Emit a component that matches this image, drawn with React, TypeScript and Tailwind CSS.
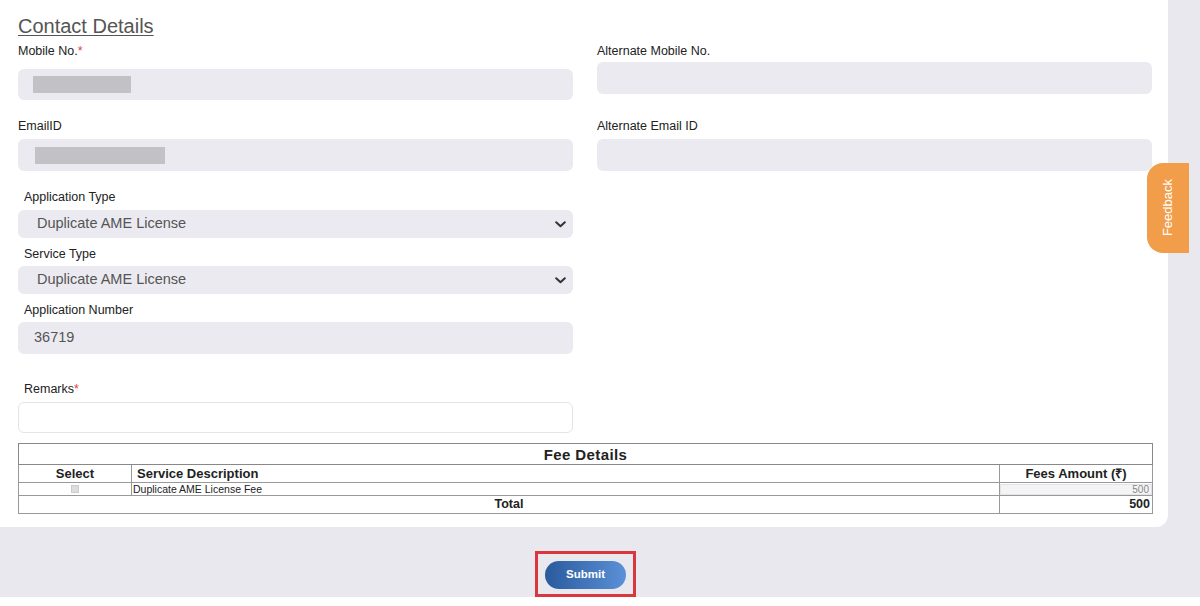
const Label = ({ text, req, className = "" }: { text: string; req?: boolean; className?: string }) => (
  <div className={`text-[12.5px] leading-[13px] text-[#222] ${className}`}>
    {text}
    {req && <span className="text-[#e0403a]">*</span>}
  </div>
);

const GrayInput = ({ className = "", children }: { className?: string; children?: React.ReactNode }) => (
  <div className={`w-[555px] rounded-md bg-[#ebeaf0] flex items-center ${className}`}>{children}</div>
);

const SelectBox = ({ value }: { value: string }) => (
  <div className="w-[555px] h-[28px] rounded-md bg-[#ebeaf0] flex items-center justify-between pl-[19px] pr-[7px]">
    <span className="text-[14.5px] text-[#555]">{value}</span>
    <svg width="11" height="7" viewBox="0 0 11 7" className="mt-[1px]">
      <polyline points="1.2,1.2 5.5,5.2 9.8,1.2" fill="none" stroke="#333" strokeWidth="2" strokeLinecap="round" strokeLinejoin="round" />
    </svg>
  </div>
);

export default function App() {
  return (
    <div className="w-[1200px] h-[606px] bg-white overflow-hidden relative" style={{ fontFamily: '"Liberation Sans", Arial, sans-serif' }}>
      <div className="h-[597px] bg-[#e9e8ef] flex flex-col">
        <div className="w-[1168px] bg-white rounded-br-xl pl-[18px] pt-[15px] pb-[13px]">
          <h2 className="text-[20px] leading-[22px] text-[#555] underline underline-offset-2 decoration-1">Contact Details</h2>

          <div className="flex gap-[24px] mt-[8px]">
            <div className="flex flex-col">
              <Label text="Mobile No." req />
              <GrayInput className="h-[31px] mt-[11px] pl-[15px]">
                <div className="w-[98px] h-[17px] bg-[#c2c1c6]" />
              </GrayInput>
            </div>
            <div className="flex flex-col">
              <Label text="Alternate Mobile No." />
              <GrayInput className="h-[32px] mt-[4px]" />
            </div>
          </div>

          <div className="flex gap-[24px] mt-[20px]">
            <div className="flex flex-col">
              <Label text="EmailID" />
              <GrayInput className="h-[32px] mt-[6px] pl-[17px]">
                <div className="w-[130px] h-[17px] bg-[#c2c1c6]" />
              </GrayInput>
            </div>
            <div className="flex flex-col">
              <Label text="Alternate Email ID" />
              <GrayInput className="h-[32px] mt-[6px]" />
            </div>
          </div>

          <Label text="Application Type" className="ml-[6px] mt-[20px]" />
          <div className="mt-[6px]">
            <SelectBox value="Duplicate AME License" />
          </div>
          <Label text="Service Type" className="ml-[6px] mt-[10px]" />
          <div className="mt-[5px]">
            <SelectBox value="Duplicate AME License" />
          </div>
          <Label text="Application Number" className="ml-[6px] mt-[10px]" />
          <GrayInput className="h-[32px] mt-[5px] pl-[16px]">
            <span className="text-[14.5px] text-[#555]">36719</span>
          </GrayInput>

          <Label text="Remarks" req className="ml-[6px] mt-[29px]" />
          <div className="w-[555px] h-[31px] mt-[6px] rounded-md border border-[#e4e4e8] bg-white" />

          <table className="w-[1135px] mt-[10px] border-collapse border border-[#555] text-[#222] leading-none">
            <tbody>
              <tr className="h-[21px]">
                <td colSpan={3} className="p-0 text-center text-[15px] tracking-[0.4px] font-bold border border-[#888]">Fee Details</td>
              </tr>
              <tr className="h-[18px]">
                <td className="p-0 w-[113px] text-center text-[13px] font-bold border border-[#999]">Select</td>
                <td className="p-0 pl-[5px] text-[13px] font-bold border border-[#999]">Service Description</td>
                <td className="p-0 w-[153px] text-center text-[13px] font-bold border border-[#999]">Fees Amount (₹)</td>
              </tr>
              <tr className="h-[13px]">
                <td className="p-0 text-center border border-[#999] text-[8px] leading-[8px]">
                  <span className="inline-block w-[8px] h-[8px] bg-[#ddd] border border-[#ccc] align-middle" />
                </td>
                <td className="p-0 pl-[1px] text-[10.5px] leading-[10px] border border-[#999]">Duplicate AME License Fee</td>
                <td className="p-0 border border-[#999] text-[10px] leading-[9px]">
                  <div className="h-[11px] bg-[#f4f4f6] border border-[#e4e4e4] text-right pr-[2px] text-[#888]">500</div>
                </td>
              </tr>
              <tr className="h-[18px]">
                <td colSpan={2} className="p-0 text-center text-[12.5px] font-bold border border-[#999]">Total</td>
                <td className="p-0 text-right pr-[2px] text-[12.5px] font-bold border border-[#999]">500</td>
              </tr>
            </tbody>
          </table>
        </div>

        <div className="flex justify-center mt-[24px] pr-[29px]">
          <div className="border-[3px] border-[#d9363e] px-[7px] pt-[7px] pb-[5px]">
            <button className="w-[81px] h-[28px] rounded-full bg-gradient-to-r from-[#2a5a9c] to-[#5b91d8] text-white text-[11.5px] font-bold">
              Submit
            </button>
          </div>
        </div>
      </div>

      <div className="absolute left-[1147px] top-[163px] w-[42px] h-[90px] bg-[#f19d4a] rounded-l-2xl flex items-center justify-center">
        <span className="text-white text-[13px] [writing-mode:vertical-rl] rotate-180">Feedback</span>
      </div>
    </div>
  );
}
